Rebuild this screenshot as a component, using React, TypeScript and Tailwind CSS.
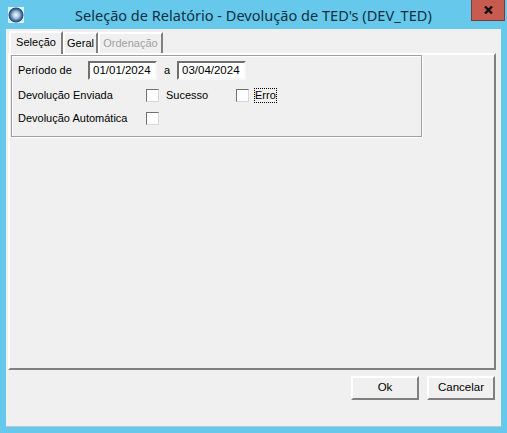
import React from "react";

const FONT = "font-['Liberation_Sans',sans-serif]";

function Check() {
  return (
    <span className="block w-[13px] h-[13px] shrink-0 bg-white border border-t-[#707070] border-l-[#707070] border-r-[#d8d8d8] border-b-[#d8d8d8]" />
  );
}

function DateInput({ value }: { value: string }) {
  return (
    <div className="w-[69px] h-[19px] bg-white border-2 border-t-[#707070] border-l-[#707070] border-r-[#f8f8f8] border-b-[#f8f8f8] pl-[3px] text-[11.5px] leading-[15px] text-black">
      {value}
    </div>
  );
}

function Button({ label }: { label: string }) {
  return (
    <div className="w-[68px] h-[24px] flex items-center justify-center bg-[#f0f0f0] border-2 border-t-white border-l-white border-r-[#808080] border-b-[#808080] text-[11.5px] text-black">
      {label}
    </div>
  );
}

export default function App() {
  return (
    <div className={`w-[507px] h-[433px] bg-[#66c9ec] flex flex-col overflow-hidden ${FONT}`}>
      {/* Title bar */}
      <div className="relative h-[29px] shrink-0 flex items-center pl-[8px]">
        <svg width="16" height="16" viewBox="0 0 16 16" className="shrink-0">
          <defs>
            <radialGradient id="orb" cx="50%" cy="50%" r="55%">
              <stop offset="0%" stopColor="#f4f8fb" />
              <stop offset="40%" stopColor="#a8c4dc" />
              <stop offset="75%" stopColor="#2f5f92" />
              <stop offset="100%" stopColor="#14305a" />
            </radialGradient>
          </defs>
          <rect width="16" height="16" fill="#dff1f8" />
          <circle cx="8" cy="8" r="7.5" fill="url(#orb)" />
        </svg>
        <span className="ml-[51px] font-['Noto_Sans',sans-serif] text-[14.56px] leading-[20px] text-[#10303f] whitespace-nowrap">
          Seleção de Relatório - Devolução de TED's (DEV_TED)
        </span>
        <div className="absolute left-[471px] top-0 w-[34px] h-[21px] bg-[#c75b50] border border-t-0 border-[#7a3a36] flex items-center justify-center">
          <svg width="9" height="8" viewBox="0 0 9 8">
            <path d="M1 0.5 L8 7.5 M8 0.5 L1 7.5" stroke="#111" strokeWidth="2.4" />
          </svg>
        </div>
      </div>

      {/* Client area */}
      <div className="w-[495px] h-[398px] ml-[6px] bg-[#f0f0f0] border-b border-b-[#b8c8d0] flex flex-col pl-[2px] pt-[1px]">
        {/* Tabs */}
        <div className="flex h-[23px] items-end pl-[1px] relative z-10 text-[11px]">
          <div className="w-[54px] h-[23px] -mb-[1px] pb-[3px] bg-[#f0f0f0] border-2 border-b-0 border-t-white border-l-white border-r-[#808080] flex items-center justify-center text-black">
            Seleção
          </div>
          <div className="w-[35px] h-[21px] bg-[#f0f0f0] border-2 border-b-0 border-t-white border-l-white border-r-[#808080] flex items-center justify-center text-black">
            Geral
          </div>
          <div className="w-[65px] h-[21px] bg-[#f0f0f0] border-2 border-b-0 border-t-white border-l-white border-r-[#808080] flex items-center justify-center text-[#a0a0a0]">
            Ordenação
          </div>
        </div>

        {/* Tab page */}
        <div className="w-[488px] h-[317px] shrink-0 border-2 border-t-white border-l-white border-r-[#808080] border-b-[#808080] pl-[1px]">
          <div className="w-[411px] h-[82px] border border-[#a0a0a0] shadow-[1px_1px_0_#ffffff,inset_1px_1px_0_#ffffff] pl-[6px] pt-[5px] text-[11px] text-black">
            <div className="flex items-center h-[19px]">
              <span className="w-[70px]">Período de</span>
              <DateInput value="01/01/2024" />
              <span className="w-[20px] text-center">a</span>
              <DateInput value="03/04/2024" />
            </div>
            <div className="flex items-center h-[14px] mt-[8px]">
              <span className="w-[128px]">Devolução Enviada</span>
              <Check />
              <span className="ml-[7px] w-[70px]">Sucesso</span>
              <Check />
              <span className="ml-[5px] border border-dotted border-black leading-[13px]">Erro</span>
            </div>
            <div className="flex items-center h-[14px] mt-[9px]">
              <span className="w-[128px]">Devolução Automática</span>
              <Check />
            </div>
          </div>
        </div>

        {/* Footer buttons */}
        <div className="flex justify-end gap-[8px] w-[487px] mt-[6px]">
          <Button label="Ok" />
          <Button label="Cancelar" />
        </div>
      </div>
    </div>
  );
}
